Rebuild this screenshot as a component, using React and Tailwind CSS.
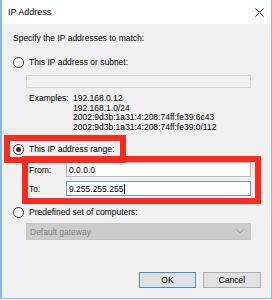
import React from 'react';

const FONT = { fontFamily: '"Liberation Sans", Arial, sans-serif' };

function Radio({ checked }) {
  return (
    <span className="w-[11px] h-[11px] rounded-full border border-[#333333] bg-white flex items-center justify-center shrink-0">
      {checked && <span className="w-[5px] h-[5px] rounded-full bg-[#333333]" />}
    </span>
  );
}

export default function App() {
  return (
    <div className="w-[272px] h-[300px] bg-[#f4f7fb] text-black" style={FONT}>
      <div className="relative w-[272px] h-[299px] flex flex-col border-l-2 border-r border-b border-[#86b8e8] bg-[#f0f0f0] text-[8.5px] leading-[12px]">
        {/* Title bar */}
        <div className="h-6 bg-white flex items-center justify-between pl-1.5 pr-[10px] shrink-0">
          <span className="text-[9px]">IP Address</span>
          <svg width="9" height="9" viewBox="0 0 9 9" className="mr-[-3px]">
            <path d="M0.5 0.5 L8.5 8.5 M8.5 0.5 L0.5 8.5" stroke="#222" strokeWidth="1" />
          </svg>
        </div>

        {/* Body */}
        <div className="flex flex-col pl-[11px] pt-2">
          <div className="h-3">Specify the IP addresses to match:</div>

          <div className="h-3 mt-3 flex items-center gap-[5px]">
            <Radio />
            <span>This IP address or subnet:</span>
          </div>
          <div className="ml-[13px] mt-[7px] w-[225px] h-[13px] border border-[#d5d5d5] bg-[#f0f0f0]" />

          <div className="ml-[16px] mt-[6px] flex leading-[9.5px]">
            <span className="w-[44px]">Examples:</span>
            <div className="flex flex-col">
              <span>192.168.0.12</span>
              <span>192.168.1.0/24</span>
              <span>2002:9d3b:1a31:4:208:74ff:fe39:6c43</span>
              <span>2002:9d3b:1a31:4:208:74ff:fe39:0/112</span>
            </div>
          </div>

          <div className="h-3 mt-[11px] flex items-center gap-[5px]">
            <Radio checked />
            <span>This IP address range:</span>
          </div>

          <div className="ml-[16px] mt-[7px] flex items-center">
            <span className="w-[37px]">From:</span>
            <div className="w-[185px] h-[15px] border border-[#b9b9b9] bg-white flex items-center pl-[2px]">0.0.0.0</div>
          </div>
          <div className="ml-[16px] mt-[4px] flex items-center">
            <span className="w-[37px]">To:</span>
            <div className="w-[185px] h-[15px] border border-[#5b9ee0] bg-white flex items-center pl-[2px]">
              <span>9.255.255.255</span>
              <span className="w-px h-[10px] bg-black ml-px" />
            </div>
          </div>

          <div className="h-3 mt-[10px] flex items-center gap-[5px]">
            <Radio />
            <span>Predefined set of computers:</span>
          </div>
          <div className="ml-[13px] mt-[5px] w-[225px] h-[17px] border border-[#c4c4c4] bg-[#cccccc] flex items-center justify-between pl-[3px] pr-[6px] text-[#838383]">
            <span>Default gateway</span>
            <svg width="8" height="5" viewBox="0 0 8 5">
              <path d="M0.5 0.5 L4 4 L7.5 0.5" fill="none" stroke="#a3a3a3" strokeWidth="1" />
            </svg>
          </div>

          <div className="mt-[32px] flex justify-end gap-[7px] pr-[10px]">
            <button className="w-[57px] h-4 border border-[#3f8fe0] bg-[#e1e1e1] flex items-center justify-center leading-none">OK</button>
            <button className="w-[58px] h-4 border border-[#adadad] bg-[#e1e1e1] flex items-center justify-center leading-none">Cancel</button>
          </div>
        </div>

        {/* Red annotation boxes */}
        <div className="absolute left-[2px] top-[135px] w-[122px] h-[28px] border-[6px] border-[#fe2a1d] pointer-events-none" />
        <div className="absolute left-[20px] top-[156px] w-[239px] h-[48px] border-[6px] border-[#fe2a1d] pointer-events-none" />
      </div>
    </div>
  );
}
